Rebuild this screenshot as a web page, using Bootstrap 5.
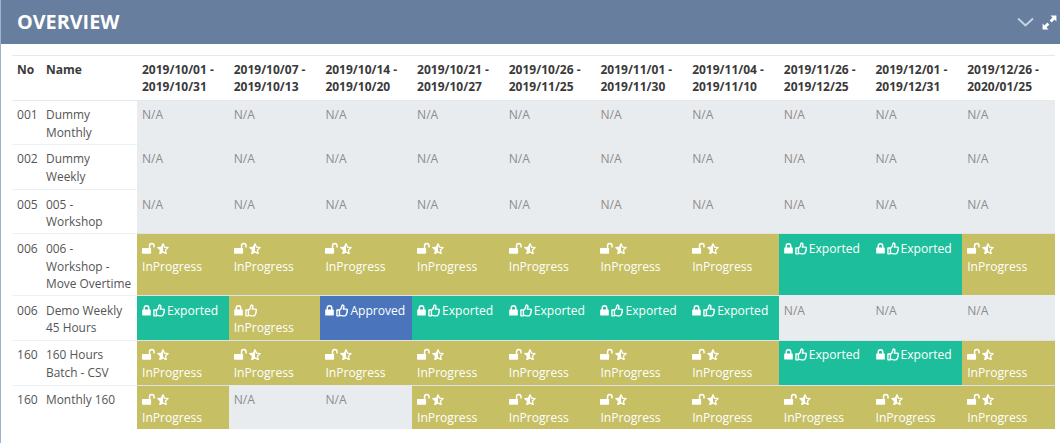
<!DOCTYPE html>
<html lang="en">
<head>
<meta charset="utf-8">
<title>Overview</title>
<link href="https://cdn.jsdelivr.net/npm/bootstrap@5.3.0/dist/css/bootstrap.min.css" rel="stylesheet">
<style>
body{font-family:"Open Sans","Liberation Sans",sans-serif;font-size:12.1px;line-height:17.6px;color:#555;background:#fff;overflow:hidden}
.ov-panel{height:443px;border-left:1px solid #9fb3cf}
.ov-head{height:44px;background:#687e9e;padding:0 3px 0 16px}
.ov-title{font-size:19.8px;font-weight:700;color:#fff;margin:0;line-height:44px}
.ov-body{padding:11px 4px 0 11px}
.ov-table{table-layout:fixed;width:1043px;border-collapse:collapse;margin:0}
.ov-table th,.ov-table td{padding:5.5px 5px 2.6px;vertical-align:top;border-top:1px solid #eef1f4;border-bottom:0;font-size:12.1px;line-height:17.6px;color:#555}
.ov-table tr.ov-tall td{padding-bottom:3.6px}
.ov-table thead th{border-top:1px solid #e4e9ee;border-bottom:1px solid #e4e9ee;font-weight:700;color:#3a3a3a;padding:5px 5px 4px;font-size:12px;line-height:17.3px}
.ov-table td.ov-name{padding-right:0;white-space:nowrap;font-size:11.9px}
.ov-table td.c-na{background:#e9ecef;color:#8d8d8d;border-top-color:#e9ecef}
.ov-table td.c-prog{background:#c6bf64;color:#fff;border-top-color:#dfe3e8;white-space:nowrap}
.ov-table td.c-exp{background:#1dbe9b;color:#fff;border-top-color:#dfe3e8;white-space:nowrap}
.ov-table td.c-app{background:#4a74bb;color:#fff;border-top-color:#dfe3e8;white-space:nowrap}
.ic{display:inline-block;height:13px;vertical-align:-2px;fill:#fff;margin-right:2px}
.ic-lock{width:9px}
.ic-open{width:13px}
.ic-thumb{width:12px;height:13px}
.ic-star{width:12px}
.ic-line{fill:none;stroke:#fff;stroke-width:1.5;stroke-linejoin:round;stroke-linecap:round}
.ov-tool{width:17px;height:16px}
.ov-tool2{width:15px;height:15px}
</style>
</head>
<body>
<svg class="d-none" aria-hidden="true">
<symbol id="i-lock" viewBox="0 0 9 13"><path d="M.8 5.500h.7V4a3 3 0 0 1 6 0v1.500h.7c.3 0 .6.300.6.600v4.800c0 .3-.3.600-.6.600H.8c-.3 0-.6-.3-.6-.6V6.100c0-.3.300-.6.600-.6zM3 5.500h3V4a1.500 1.500 0 0 0-3 0z"/></symbol>
<symbol id="i-open" viewBox="0 0 13 13"><path d="M.6 6h6.200V3.800a3 3 0 0 1 6-.2v1.900h-1.500V3.800a1.500 1.500 0 0 0-3 0V6h.2c.3 0 .6.300.6.600v4.500c0 .3-.3.600-.6.600H.6c-.3 0-.6-.3-.6-.6V6.600C0 6.300.3 6 .6 6z"/></symbol>
<symbol id="i-thumb" viewBox="0 0 13 14"><path class="ic-line" d="M1 6.500h2.700v6.300H1zM3.700 7c1.500-1 2.500-3 2.800-5.300.1-1 1.900-.8 2.100.7.1 1-.3 2.200-.7 3.100h3.300c1.400 0 1.500 1.800.6 2.200.6.700.4 1.700-.3 2 .3.800-.1 1.500-.7 1.700.1 1-.5 1.400-1.300 1.400H6.800c-1.200 0-2-.6-3.100-.8"/></symbol>
<symbol id="i-star" viewBox="0 0 14 13"><path class="ic-line" d="M7 1l1.800 3.900 4.200.5-3.100 2.900.8 4.200L7 10.400l-3.700 2.100.8-4.200L1 5.400l4.200-.5z"/><path d="M7 1v9.400l-3.700 2.100.8-4.200L1 5.400l4.200-.5z"/></symbol>
</svg>
<div class="ov-panel">
  <div class="ov-head d-flex align-items-center justify-content-between">
    <h1 class="ov-title">OVERVIEW</h1>
    <div class="d-flex align-items-center gap-2">
      <svg class="ov-tool" viewBox="0 0 17 16"><path d="M1 4.500l7.500 7 7.500-7" fill="none" stroke="#c9d5e4" stroke-width="1.800"/></svg>
      <svg class="ov-tool2" viewBox="0 0 15 15"><path d="M8.500.6h5.900v5.900l-1.900-1.900-2.800 2.800-2-2 2.800-2.800zM6.500 14.400H.6V8.500l1.900 1.900 2.800-2.800 2 2-2.800 2.800z" fill="#fff"/></svg>
    </div>
  </div>
  <div class="ov-body">
    <table class="table ov-table">
      <colgroup><col style="width:29px"><col style="width:96px"><col span="9" style="width:91.7px"><col></colgroup>
      <thead><tr><th>No</th><th>Name</th>
        <th>2019/10/01 - 2019/10/31</th><th>2019/10/07 - 2019/10/13</th><th>2019/10/14 - 2019/10/20</th><th>2019/10/21 - 2019/10/27</th><th>2019/10/26 - 2019/11/25</th><th>2019/11/01 - 2019/11/30</th><th>2019/11/04 - 2019/11/10</th><th>2019/11/26 - 2019/12/25</th><th>2019/12/01 - 2019/12/31</th><th>2019/12/26 - 2020/01/25</th></tr></thead>
      <tbody id="rows"></tbody>
    </table>
  </div>
</div>
<script>
var ic=function(id){var vb={lock:'0 0 9 13',open:'0 0 13 13',thumb:'0 0 13 14',star:'0 0 14 13'}[id];return '<svg class="ic ic-'+id+'" viewBox="'+vb+'"><use href="#i-'+id+'"/></svg>';};
var cell={
 n:function(){return '<td class="c-na">N/A</td>';},
 p:function(){return '<td class="c-prog">'+ic('open')+ic('star')+'<br>InProgress</td>';},
 q:function(){return '<td class="c-prog">'+ic('lock')+ic('thumb')+'<br>InProgress</td>';},
 e:function(){return '<td class="c-exp">'+ic('lock')+ic('thumb')+'Exported</td>';},
 a:function(){return '<td class="c-app">'+ic('lock')+ic('thumb')+'Approved</td>';}
};
var data=[['001','Dummy<br>Monthly','nnnnnnnnnn'],['002','Dummy<br>Weekly','nnnnnnnnnn'],['005','005 -<br>Workshop','nnnnnnnnnn'],['006','006 -<br>Workshop -<br>Move Overtime','pppppppeep'],['006','Demo Weekly<br>45 Hours','eqaeeeennn'],['160','160 Hours<br>Batch - CSV','pppppppeep'],['160','Monthly 160<br>&nbsp;','pnnppppppp']];
document.getElementById('rows').innerHTML=data.map(function(r,i){return '<tr'+((i==1||i==5)?' class="ov-tall"':'')+'><td>'+r[0]+'</td><td class="ov-name">'+r[1]+'</td>'+r[2].split('').map(function(c){return cell[c]();}).join('')+'</tr>';}).join('');
</script>
</body>
</html>
